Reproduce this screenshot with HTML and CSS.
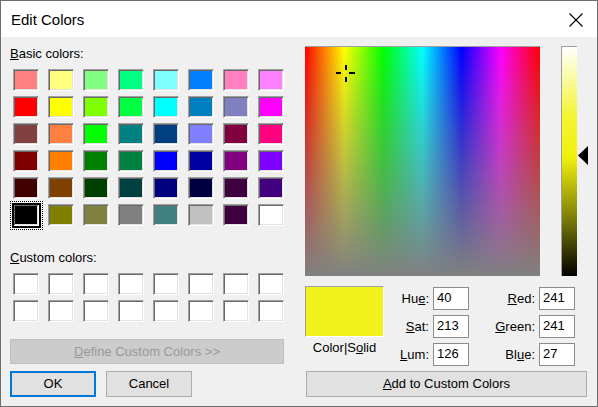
FILE: index.html
```html
<!DOCTYPE html>
<html>
<head>
<meta charset="utf-8">
<title>Edit Colors</title>
<link rel="stylesheet" href="styles.css">
</head>
<body>
<div class="window">
  <div class="titlebar">
    <span class="title">Edit Colors</span>
    <span class="close">
      <svg width="14" height="14" viewBox="0 0 14 14"><path d="M0.5 0.5 L13.5 13.5 M13.5 0.5 L0.5 13.5" stroke="#000" stroke-width="1.1" fill="none"/></svg>
    </span>
  </div>
  <div class="content">
    <div class="left">
      <div class="label label-basic"><u>B</u>asic colors:</div>
      <div class="swatches">
        <div class="sw" style="--c:#FF8080"></div><div class="sw" style="--c:#FFFF80"></div><div class="sw" style="--c:#80FF80"></div><div class="sw" style="--c:#00FF80"></div><div class="sw" style="--c:#80FFFF"></div><div class="sw" style="--c:#0080FF"></div><div class="sw" style="--c:#FF80C0"></div><div class="sw" style="--c:#FF80FF"></div>
        <div class="sw" style="--c:#FF0000"></div><div class="sw" style="--c:#FFFF00"></div><div class="sw" style="--c:#80FF00"></div><div class="sw" style="--c:#00FF40"></div><div class="sw" style="--c:#00FFFF"></div><div class="sw" style="--c:#0080C0"></div><div class="sw" style="--c:#8080C0"></div><div class="sw" style="--c:#FF00FF"></div>
        <div class="sw" style="--c:#804040"></div><div class="sw" style="--c:#FF8040"></div><div class="sw" style="--c:#00FF00"></div><div class="sw" style="--c:#008080"></div><div class="sw" style="--c:#004080"></div><div class="sw" style="--c:#8080FF"></div><div class="sw" style="--c:#800040"></div><div class="sw" style="--c:#FF0080"></div>
        <div class="sw" style="--c:#800000"></div><div class="sw" style="--c:#FF8000"></div><div class="sw" style="--c:#008000"></div><div class="sw" style="--c:#008040"></div><div class="sw" style="--c:#0000FF"></div><div class="sw" style="--c:#0000A0"></div><div class="sw" style="--c:#800080"></div><div class="sw" style="--c:#8000FF"></div>
        <div class="sw" style="--c:#400000"></div><div class="sw" style="--c:#804000"></div><div class="sw" style="--c:#004000"></div><div class="sw" style="--c:#004040"></div><div class="sw" style="--c:#000080"></div><div class="sw" style="--c:#000040"></div><div class="sw" style="--c:#400040"></div><div class="sw" style="--c:#400080"></div>
        <div class="sw selected" style="--c:#000000"></div><div class="sw" style="--c:#808000"></div><div class="sw" style="--c:#808040"></div><div class="sw" style="--c:#808080"></div><div class="sw" style="--c:#408080"></div><div class="sw" style="--c:#C0C0C0"></div><div class="sw" style="--c:#400040"></div><div class="sw" style="--c:#FFFFFF"></div>
      </div>
      <div class="label label-custom"><u>C</u>ustom colors:</div>
      <div class="swatches custom">
        <div class="sw"></div><div class="sw"></div><div class="sw"></div><div class="sw"></div><div class="sw"></div><div class="sw"></div><div class="sw"></div><div class="sw"></div>
        <div class="sw"></div><div class="sw"></div><div class="sw"></div><div class="sw"></div><div class="sw"></div><div class="sw"></div><div class="sw"></div><div class="sw"></div>
      </div>
      <div class="btn btn-disabled btn-define"><u>D</u>efine Custom Colors &gt;&gt;</div>
      <div class="btn-row">
        <div class="btn btn-default">OK</div>
        <div class="btn">Cancel</div>
      </div>
    </div>
    <div class="right">
      <div class="picker">
        <div class="spectrum">
          <svg class="cross" width="20" height="20" viewBox="0 0 20 20">
            <rect x="9" y="1" width="2" height="5" fill="#000"/>
            <rect x="9" y="13" width="2" height="5" fill="#000"/>
            <rect x="0" y="8" width="5" height="2" fill="#000"/>
            <rect x="13" y="8" width="6" height="2" fill="#000"/>
          </svg>
        </div>
        <div class="lumwrap">
          <div class="lumbar"></div>
          <svg class="arrow" width="11" height="19" viewBox="0 0 11 19"><polygon points="0,9.5 10,0 10,19" fill="#000"/></svg>
        </div>
      </div>
      <div class="bottom">
        <div class="samplecol">
          <div class="sample"></div>
          <div class="sample-label">Color|S<u>o</u>lid</div>
        </div>
        <div class="fields">
          <div class="flabel">Hu<u>e</u>:</div><div class="edit">40</div>
          <div class="flabel"><u>R</u>ed:</div><div class="edit">241</div>
          <div class="flabel"><u>S</u>at:</div><div class="edit">213</div>
          <div class="flabel"><u>G</u>reen:</div><div class="edit">241</div>
          <div class="flabel"><u>L</u>um:</div><div class="edit">126</div>
          <div class="flabel">Bl<u>u</u>e:</div><div class="edit">27</div>
        </div>
      </div>
      <div class="btn btn-add"><u>A</u>dd to Custom Colors</div>
    </div>
  </div>
</div>
</body>
</html>
```
FILE: styles.css
```css
html, body {
  margin: 0;
  padding: 0;
  background: #f0f0f0;
}
body {
  font-family: "Liberation Sans", Arial, sans-serif;
  font-size: 13px;
  color: #000;
}
.window {
  width: 598px;
  height: 407px;
  box-sizing: border-box;
  border: 1px solid #6e6e6e;
  background: #f0f0f0;
  overflow: hidden;
}
.titlebar {
  height: 36px;
  background: #fff;
  display: flex;
  align-items: center;
  justify-content: space-between;
  padding: 0 14px 0 10px;
}
.title {
  font-size: 15px;
  line-height: 36px;
  padding-top: 1px;
}
.close {
  display: flex;
  margin-top: 1px;
}
.content {
  display: flex;
  padding: 9px 0 0 9px;
}
.left {
  width: 274px;
  display: flex;
  flex-direction: column;
}
.label {
  line-height: 16px;
  height: 16px;
}
.label-custom {
  margin-top: 24px;
}
.swatches {
  display: grid;
  grid-template-columns: repeat(8, 26px);
  grid-auto-rows: 22px;
  column-gap: 9px;
  row-gap: 5px;
  margin: 7px 0 0 3px;
}
.sw {
  position: relative;
  box-sizing: border-box;
  background: var(--c, #fff);
  border: 1px solid;
  border-color: #a0a0a0 #ffffff #ffffff #a0a0a0;
  box-shadow: inset 1px 1px 0 #696969, inset -1px -1px 0 #e3e3e3;
}
.sw.selected::before {
  content: "";
  position: absolute;
  left: -4px; top: -4px; right: -5px; bottom: -5px;
  border: 1px dotted #000;
}
.sw.selected::after {
  content: "";
  position: absolute;
  left: -2px; top: -2px; right: -3px; bottom: -3px;
  border: 2px solid #000;
}
.btn {
  box-sizing: border-box;
  height: 26px;
  border: 1px solid #adadad;
  background: #e1e1e1;
  display: flex;
  align-items: center;
  justify-content: center;
  line-height: 16px;
}
.btn-define {
  margin-top: 17px;
  height: 25px;
  background: #cccccc;
  border-color: #bfbfbf;
  color: #999999;
}
.btn-row {
  display: flex;
  gap: 10px;
  margin-top: 7px;
}
.btn-row .btn {
  width: 86px;
}
.btn-default {
  border: 2px solid #0078d7;
}
.right {
  margin-left: 21px;
  width: 283px;
  display: flex;
  flex-direction: column;
}
.picker {
  display: flex;
  height: 230px;
}
.spectrum {
  position: relative;
  box-sizing: border-box;
  width: 235px;
  height: 230px;
  border-top: 1px solid #a0a0a0;
  background:
    linear-gradient(to bottom, rgba(128,128,128,0), #808080),
    linear-gradient(to right, #ff0000, #ffff00 16.67%, #00ff00 33.33%, #00ffff 50%, #0000ff 66.67%, #ff00ff 83.33%, #ff0000);
}
.cross {
  position: absolute;
  left: 31px;
  top: 17px;
}
.lumwrap {
  position: relative;
  margin-left: 21px;
  width: 27px;
}
.lumbar {
  box-sizing: border-box;
  width: 16px;
  height: 230px;
  border-top: 1px solid #a0a0a0;
  border-left: 1px solid #a0a0a0;
  background: linear-gradient(to bottom, #ffffff, #f4f433 30%, #f1f10e 48%, #8a8a08 72%, #000000);
}
.arrow {
  position: absolute;
  left: 17px;
  top: 100px;
}
.bottom {
  display: flex;
  margin-top: 10px;
  height: 85px;
}
.samplecol {
  width: 79px;
  display: flex;
  flex-direction: column;
}
.sample {
  box-sizing: border-box;
  height: 51px;
  background: #f1f11b;
  border: 1px solid;
  border-color: #a0a0a0 #ffffff #ffffff #a0a0a0;
}
.sample-label {
  margin-top: 3px;
  text-align: center;
  line-height: 16px;
}
.fields {
  display: grid;
  grid-template-columns: 45px 36px 62px 36px;
  grid-auto-rows: 23px;
  column-gap: 4px;
  row-gap: 5px;
  margin-top: 1px;
  align-items: center;
}
.flabel {
  text-align: right;
  line-height: 16px;
}
.edit {
  box-sizing: border-box;
  height: 23px;
  border: 1px solid #8c8c8c;
  background: #fff;
  padding: 2px 0 0 3px;
  line-height: 16px;
}
.btn-add {
  margin-left: 1px;
  width: 281px;
}
u {
  text-decoration: underline;
  text-underline-offset: 1px;
}
```
